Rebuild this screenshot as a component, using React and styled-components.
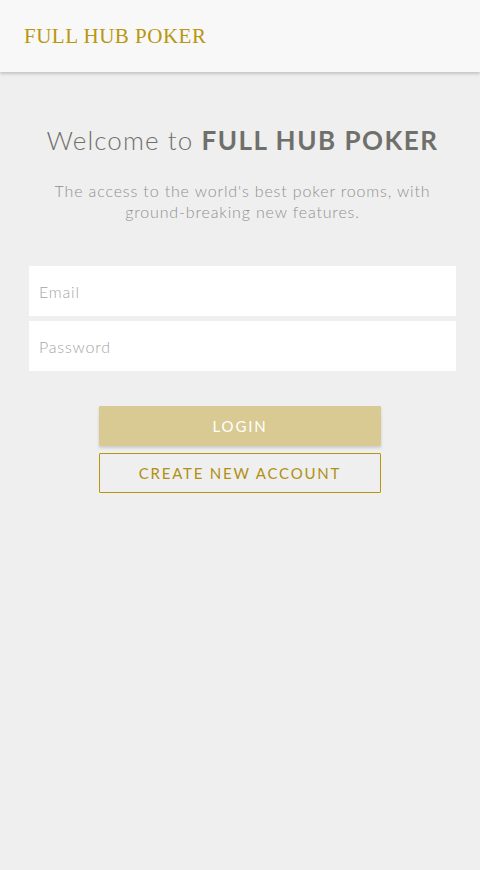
import React from "react";
import styled, { createGlobalStyle } from "styled-components";

const GlobalStyle = createGlobalStyle`
  html, body {
    margin: 0;
    padding: 0;
    background: #efefef;
  }
  body {
    font-family: Lato, "Noto Sans", sans-serif;
  }
`;

const Page = styled.div`
  min-height: 870px;
  background: #efefef;
  display: flex;
  flex-direction: column;
`;

const Header = styled.header`
  height: 72px;
  background: #f8f8f8;
  box-shadow: 0 2px 3px rgba(0, 0, 0, 0.18);
  display: flex;
  align-items: center;
  padding: 0 24px;
`;

const Brand = styled.div`
  font-family: "Liberation Serif", "DejaVu Serif", serif;
  font-size: 21px;
  color: #b8960f;
  letter-spacing: 0.5px;
  margin-top: 1px;
`;

const Content = styled.main`
  display: flex;
  flex-direction: column;
  align-items: center;
  padding: 52px 24px 0 29px;
`;

const Title = styled.h1`
  margin: 0;
  font-size: 26px;
  font-weight: 300;
  color: #6f706b;
  letter-spacing: 1.1px;
  text-align: center;

  b {
    font-weight: 700;
    letter-spacing: 1.5px;
  }
`;

const Lead = styled.p`
  margin: 24px 0 0;
  font-size: 16px;
  font-weight: 300;
  line-height: 21px;
  color: #8f8f8f;
  text-align: center;
  letter-spacing: 0.85px;
`;

const Fields = styled.div`
  align-self: stretch;
  margin-top: 44px;
  display: flex;
  flex-direction: column;
  gap: 5px;
`;

const Input = styled.input`
  height: 50px;
  border: none;
  outline: none;
  background: #ffffff;
  padding: 0 10px;
  font-family: Lato, "Noto Sans", sans-serif;
  font-size: 16px;
  font-weight: 300;
  letter-spacing: 0.8px;
  color: #555;
  box-sizing: border-box;

  &::placeholder {
    color: #a5a5a5;
  }
`;

const Actions = styled.div`
  margin-top: 35px;
  width: 282px;
  display: flex;
  flex-direction: column;
  gap: 7px;
  margin-right: 5px;
`;

const Button = styled.button`
  height: 40px;
  box-sizing: border-box;
  font-family: Lato, "Noto Sans", sans-serif;
  font-size: 15px;
  font-weight: 400;
  letter-spacing: 1.8px;
  text-transform: uppercase;
  cursor: pointer;
  border-radius: 1px;
  background: ${(p) => (p.$primary ? "#d8ca92" : "transparent")};
  color: ${(p) => (p.$primary ? "#ffffff" : "#b08f12")};
  border: ${(p) => (p.$primary ? "none" : "1px solid #b8960f")};
  box-shadow: ${(p) => (p.$primary ? "0 2px 3px rgba(0,0,0,0.15)" : "none")};
`;

export default function App() {
  return (
    <Page>
      <GlobalStyle />
      <Header>
        <Brand>FULL HUB POKER</Brand>
      </Header>
      <Content>
        <Title>
          Welcome to <b>FULL HUB POKER</b>
        </Title>
        <Lead>
          The access to the world's best poker rooms, with
          <br />
          ground-breaking new features.
        </Lead>
        <Fields>
          <Input type="email" placeholder="Email" />
          <Input type="password" placeholder="Password" />
        </Fields>
        <Actions>
          <Button $primary>Login</Button>
          <Button>Create new account</Button>
        </Actions>
      </Content>
    </Page>
  );
}
